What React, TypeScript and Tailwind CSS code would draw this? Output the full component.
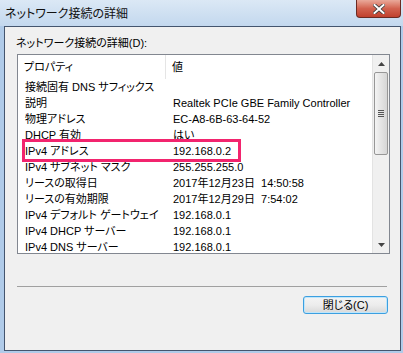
import React from "react";

type Row = { name: string; value: string };

const ROWS: Row[] = [
  { name: "接続固有 DNS サフィックス", value: "" },
  { name: "説明", value: "Realtek PCIe GBE Family Controller" },
  { name: "物理アドレス", value: "EC-A8-6B-63-64-52" },
  { name: "DHCP 有効", value: "はい" },
  { name: "IPv4 アドレス", value: "192.168.0.2" },
  { name: "IPv4 サブネット マスク", value: "255.255.255.0" },
  { name: "リースの取得日", value: "2017年12月23日  14:50:58" },
  { name: "リースの有効期限", value: "2017年12月29日  7:54:02" },
  { name: "IPv4 デフォルト ゲートウェイ", value: "192.168.0.1" },
  { name: "IPv4 DHCP サーバー", value: "192.168.0.1" },
  { name: "IPv4 DNS サーバー", value: "192.168.0.1" },
];

const font = "font-['Liberation_Sans','Noto_Sans_CJK_JP',sans-serif] [font-feature-settings:'palt']";

function ScrollBar() {
  return (
    <div className="flex w-[17px] shrink-0 flex-col border-l border-[#e3e3e3] bg-[#f0f0f0]">
      <div className="flex h-[17px] items-center justify-center">
        <svg width="7" height="4" viewBox="0 0 7 4"><path d="M0 4 L3.5 0 L7 4 Z" fill="#444" /></svg>
      </div>
      <div className="mx-[1px] flex h-[83px] items-center justify-center rounded-[2px] border border-[#979797] bg-gradient-to-r from-[#f4f4f4] via-[#e4e4e4] to-[#d6d6d6]">
        <div className="flex flex-col gap-[1px]">
          <div className="h-[1px] w-[6px] bg-[#555]" />
          <div className="h-[1px] w-[6px] bg-[#555]" />
          <div className="h-[1px] w-[6px] bg-[#555]" />
          <div className="h-[1px] w-[6px] bg-[#555]" />
        </div>
      </div>
      <div className="flex-1" />
      <div className="flex h-[17px] items-center justify-center">
        <svg width="7" height="4" viewBox="0 0 7 4"><path d="M0 0 L3.5 4 L7 0 Z" fill="#444" /></svg>
      </div>
    </div>
  );
}

export default function App() {
  return (
    <div className={`flex h-[353px] w-[403px] flex-col overflow-hidden bg-[#b0cbe9] text-black ${font}`}>
      {/* title bar */}
      <div className="relative flex h-[26px] shrink-0 items-center bg-gradient-to-b from-[#dbe8f5] to-[#c3d8ee] pl-[5px]">
        <span className="font-['Noto_Sans_CJK_JP',sans-serif] text-[12px] leading-none text-[#111]">ネットワーク接続の詳細</span>
        <div className="absolute right-[2px] top-0 flex h-[18px] w-[45px] items-center justify-center rounded-b-[4px] border border-t-0 border-[#6b2a22] bg-gradient-to-b from-[#e9a99a] via-[#d2624f] to-[#c0402d]">
          <svg width="12" height="10" viewBox="0 0 12 10">
            <path d="M1.5 1 L10.5 9 M10.5 1 L1.5 9" stroke="#3a3a3a" strokeWidth="3.6" strokeLinecap="square" />
            <path d="M1.5 1 L10.5 9 M10.5 1 L1.5 9" stroke="#fff" strokeWidth="2" strokeLinecap="square" />
          </svg>
        </div>
      </div>

      {/* client area */}
      <div className="mb-[2px] ml-[4px] mr-[2px] flex flex-1 flex-col border border-[#44556e] bg-[#f0f0f0] px-[11px]">
        <div className="mt-[9px] h-[14px] text-[11px] leading-[14px]">ネットワーク接続の詳細(D):</div>

        <div className="relative ml-[1px] mt-[4px] flex h-[200px] w-[373px] border border-[#828790] bg-white">
          <div className="flex min-w-0 flex-1 flex-col">
            <div className="flex h-[24px] shrink-0 text-[11px] leading-[24px]">
              <div className="w-[148px] border-r border-[#e5e5e5] pl-[6px]">プロパティ</div>
              <div className="pl-[6px]">値</div>
            </div>
            {ROWS.map((row) => (
              <div key={row.name} className="flex h-[16px] shrink-0 text-[11px] leading-[16px]">
                <div className="w-[148px] truncate pl-[7px]">{row.name}</div>
                <div className="whitespace-pre pl-[7px]">{row.value}</div>
              </div>
            ))}
          </div>
          <ScrollBar />
          <div className="absolute left-[4px] top-[84px] h-[23px] w-[219px] border-[3px] border-[#f2246e]" />
        </div>

        <div className="ml-[1px] mt-[32px] h-[1px] w-[370px] bg-[#a0a0a0]" />

        <div className="mt-[9px] flex justify-end pr-[1px]">
          <button className="flex h-[18px] w-[85px] items-center justify-center rounded-[3px] border border-[#3c9fe0] bg-gradient-to-b from-[#f4f4f4] via-[#ececec] to-[#d9d9d9] text-[11px] leading-none shadow-[inset_0_0_0_1px_#bfe6fb]">
            閉じる(C)
          </button>
        </div>
      </div>
    </div>
  );
}
